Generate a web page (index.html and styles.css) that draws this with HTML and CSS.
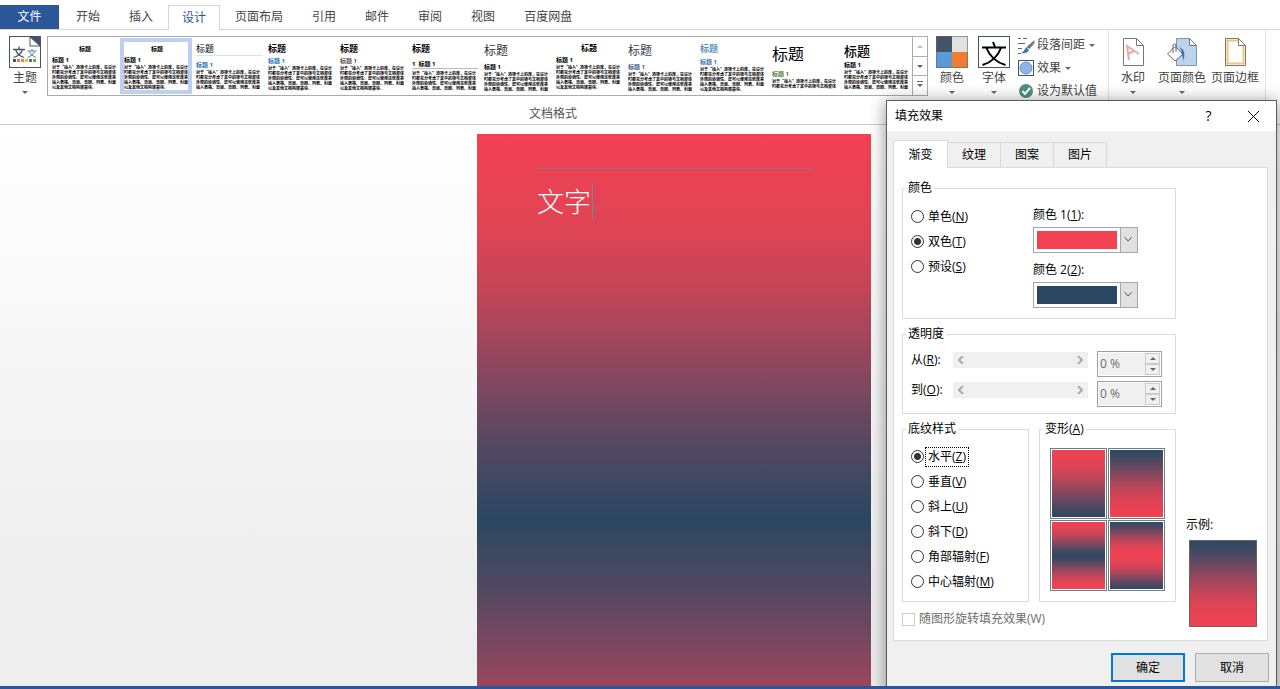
FILE: index.html
```
<!DOCTYPE html>
<html lang="zh-CN">
<head>
  <meta charset="UTF-8">
  <meta name="viewport" content="width=device-width, initial-scale=1.0">
  <title>填充效果</title>
  <link rel="stylesheet" href="styles.css">
</head>
<body>
  <div class="app">
    <nav class="tabs">
      <button class="tab file">文件</button>
      <button class="tab">开始</button>
      <button class="tab">插入</button>
      <button class="tab active">设计</button>
      <button class="tab">页面布局</button>
      <button class="tab">引用</button>
      <button class="tab">邮件</button>
      <button class="tab">审阅</button>
      <button class="tab">视图</button>
      <button class="tab">百度网盘</button>
    </nav>

    <div class="ribbon">
      <section class="group formats">
        <div class="group-items">
          <button class="big-btn themes">
            <svg width="32" height="32" viewBox="0 0 32 32">
              <path d="M1 1h21l9 8v22H1z" fill="#fff"/>
              <path d="M21 1h10v9z" fill="#44546a"/>
              <path d="M21 1v9h10z" fill="#fff" stroke="#44546a"/>
              <rect x=".5" y=".5" width="31" height="31" fill="none" stroke="#44546a"/>
              <path d="M4 13.500h12M10 10.500v3M6.500 13.500q2 6 8.500 8M13.500 13.500q-2 6-9 8" fill="none" stroke="#44546a" stroke-width="1.300"/>
              <path d="M18.500 15h9M23 13v2M20 15q2 5 7 6.500M26 15q-2 5-7.500 6.500" fill="none" stroke="#5b84b8"/>
              <path d="M4 23h3v3H4z" fill="#44546a"/>
              <path d="M8 23h3v3H8z" fill="#ed7d31"/>
              <path d="M12 23h3v3h-3z" fill="#e57d95"/>
              <path d="M16 23h3v3h-3z" fill="#ffc000"/>
              <path d="M20 23h3v3h-3z" fill="#4472c4"/>
              <path d="M24 23h3v3h-3z" fill="#70ad47"/>
            </svg>
            <span>主题</span>
            <i class="arrow"></i>
          </button>

          <div class="gallery">
            <div class="cards">
              <button class="card plain"><div class="doc"><b>标题</b><em>标题 1</em><p>对于“插入”选项卡上的库，在设计时都充分考虑了其中的项与文档整体外观的协调性。您可以使用这些库来插入表格、页眉、页脚、列表、封面以及其他文档构建基块。</p></div></button>
              <button class="card plain selected"><div class="doc"><b>标题</b><em>标题 1</em><p>对于“插入”选项卡上的库，在设计时都充分考虑了其中的项与文档整体外观的协调性。您可以使用这些库来插入表格、页眉、页脚、列表、封面以及其他文档构建基块。</p></div></button>
              <button class="card lined"><div class="doc"><b>标题</b><em>标题 1</em><p>对于“插入”选项卡上的库，在设计时都充分考虑了其中的项与文档整体外观的协调性。您可以使用这些库来插入表格、页眉、页脚、列表、封面</p></div></button>
              <button class="card basic"><div class="doc"><b>标题</b><em>标题 1</em><p>对于“插入”选项卡上的库，在设计时都充分考虑了其中的项与文档整体外观的协调性。您可以使用这些库来插入表格、页眉、页脚、列表、封面以及其他文档构建基块。</p></div></button>
              <button class="card basic mono"><div class="doc"><b>标题</b><em>标题 1</em><p>对于“插入”选项卡上的库，在设计时都充分考虑了其中的项与文档整体外观的协调性。您可以使用这些库来插入表格、页眉、页脚、列表、封面以及其他文档构建基块。</p></div></button>
              <button class="card numbered"><div class="doc"><b>标题</b><em>1&nbsp; 标题 1</em><p>对于“插入”选项卡上的库，在设计时都充分考虑了其中的项与文档整体外观的协调性。您可以使用这些库来插入表格、页眉、页脚、列表、封面</p></div></button>
              <button class="card light"><div class="doc"><b>标题</b><em>标题 1</em><p>对于“插入”选项卡上的库，在设计时都充分考虑了其中的项与文档整体外观的协调性。您可以使用这些库来插入表格、页眉、页脚、列表、封面</p></div></button>
              <button class="card centered"><div class="doc"><b>标题</b><em>标题 1</em><p>对于“插入”选项卡上的库，在设计时都充分考虑了其中的项与文档整体外观的协调性。您可以使用这些库来插入表格、页眉、页脚、列表、封面以及其他文档构建基块。</p></div></button>
              <button class="card light navy"><div class="doc"><b>标题</b><em>标题 1</em><p>对于“插入”选项卡上的库，在设计时都充分考虑了其中的项与文档整体外观的协调性。您可以使用这些库来插入表格、页眉、页脚、列表、封面</p></div></button>
              <button class="card blue"><div class="doc"><b>标题</b><em>标题 1</em><p>对于“插入”选项卡上的库，在设计时都充分考虑了其中的项与文档整体外观的协调性。您可以使用这些库来插入表格、页眉、页脚、列表、封面以及其他文档构建基块。</p></div></button>
              <button class="card large"><div class="doc"><b>标题</b><em>标题 1</em><p>对于“插入”选项卡上的库，在设计时都充分考虑了其中的项与文档整体</p></div></button>
              <button class="card medium"><div class="doc"><b>标题</b><em>标题 1</em><p>对于“插入”选项卡上的库，在设计时都充分考虑了其中的项与文档整体外观的协调性。您可以使用这些库来插入表格、页眉、页脚、列表、封面</p></div></button>
            </div>
            <div class="gallery-scroll">
              <button aria-label="上一行" disabled><i class="arrow up"></i></button>
              <button aria-label="下一行"><i class="arrow"></i></button>
              <button aria-label="其他"><i class="arrow more"></i></button>
            </div>
          </div>

          <button class="big-btn">
            <svg width="32" height="32" viewBox="0 0 32 32">
              <path d="M0 0h16v16H0z" fill="#44546a"/>
              <path d="M16 0h16v16H16z" fill="#e1e1e1"/>
              <path d="M0 16h16v16H0z" fill="#5b9bd5"/>
              <path d="M16 16h16v16H16z" fill="#ed7d31"/>
              <rect x=".5" y=".5" width="31" height="31" fill="none" stroke="#666" stroke-opacity=".6"/>
            </svg>
            <span>颜色</span>
            <i class="arrow"></i>
          </button>
          <button class="big-btn">
            <svg width="32" height="32" viewBox="0 0 32 32">
              <rect x=".5" y=".5" width="31" height="31" fill="#fff" stroke="#44546a"/>
              <path d="M4 11.500h24M15 6l2 5M8.500 12q5 13 19 17M23 12Q18 25 4.500 29" fill="none" stroke="#000" stroke-width="2"/>
            </svg>
            <span>字体</span>
            <i class="arrow"></i>
          </button>
          <div class="small-btns">
            <button class="small-btn">
              <svg width="17" height="17" viewBox="0 0 17 17">
                <path d="M0 1.500h3M5 1.500h4M0 6.500h7M0 11.500h4M0 16.500h3" stroke="#666"/>
                <path d="M16.500 3v3l-5 6-3-2z" fill="#777"/>
                <path d="M8 10l3 3q-2 4-8 3 3-1 5-6z" fill="#3a76b9"/>
              </svg>
              <span>段落间距</span><i class="arrow"></i>
            </button>
            <button class="small-btn">
              <svg width="17" height="17" viewBox="0 0 17 17">
                <rect x=".5" y=".5" width="15" height="15" fill="#fff" stroke="#44546a"/>
                <circle cx="8" cy="8" r="6" fill="#8fb4e6" stroke="#6690cc"/>
              </svg>
              <span>效果</span><i class="arrow"></i>
            </button>
            <button class="small-btn">
              <svg width="17" height="17" viewBox="0 0 17 17">
                <circle cx="8" cy="8" r="7" fill="#4f9280"/>
                <path d="M4.500 8l2.500 3 5-6" fill="none" stroke="#fff" stroke-width="2"/>
              </svg>
              <span>设为默认值</span>
            </button>
          </div>
        </div>
        <div class="group-label">文档格式</div>
      </section>

      <section class="group background">
        <div class="group-items">
          <button class="big-btn">
            <svg width="32" height="32" viewBox="0 0 32 32">
              <path d="M6.500 2.500h13l7 7v20h-20z" fill="#fff" stroke="#777"/>
              <path d="M19.500 2.500v7h7" fill="none" stroke="#777"/>
              <path d="M12 24l-2-14 12 8M11 18l6-3" fill="none" stroke="#e9aaa2" stroke-width="2"/>
            </svg>
            <span>水印</span>
            <i class="arrow"></i>
          </button>
          <button class="big-btn">
            <svg width="32" height="32" viewBox="0 0 32 32">
              <path d="M10.500 2.500h13l7 7v20h-20z" fill="#bdd2ec" stroke="#7f95b0"/>
              <path d="M23.500 2.500v7h7z" fill="#fff" stroke="#777"/>
              <path d="M9 10.500l8 7.500-8 7-7.500-7z" fill="#fff" stroke="#666"/>
              <path d="M7 17V9q1.500-2 3 0v7" fill="none" stroke="#666"/>
              <path d="M13 11q8 3 4 14 0-6-2-8 2-2-2-6z" fill="#2e74b5"/>
            </svg>
            <span>页面颜色</span>
            <i class="arrow"></i>
          </button>
          <button class="big-btn">
            <svg width="32" height="32" viewBox="0 0 32 32">
              <path d="M6.500 2.500h13l7 7v20h-20z" fill="#fff" stroke="#777"/>
              <path d="M19 4.500H8.500v23h16V10" fill="none" stroke="#f3c677" stroke-width="2"/>
              <path d="M19.500 2.500v7h7z" fill="#fff" stroke="#777"/>
            </svg>
            <span>页面边框</span>
          </button>
        </div>
      </section>
    </div>

    <main class="workspace">
      <div class="page">
        <div class="page-header"></div>
        <p class="page-text">文字<span class="caret"></span><svg class="mark" width="6" height="6" viewBox="0 0 6 6"><path d="M5.500 0v3L1 4M3 2L1 4l2 2" fill="none" stroke="#8a7478"/></svg></p>
      </div>
    </main>

    <div class="dialog" role="dialog" aria-labelledby="dialog-title">
      <header class="title-bar">
        <h1 id="dialog-title">填充效果</h1>
        <button class="title-btn" aria-label="帮助">?</button>
        <button class="title-btn" aria-label="关闭">
          <svg width="11" height="11" viewBox="0 0 11 11"><path d="M0 0l11 11M11 0L0 11" stroke="#000"/></svg>
        </button>
      </header>

      <div class="dialog-tabs">
        <button class="dialog-tab active">渐变</button>
        <button class="dialog-tab">纹理</button>
        <button class="dialog-tab">图案</button>
        <button class="dialog-tab">图片</button>
      </div>

      <form class="panel">
        <div class="options">
          <fieldset class="colors">
            <legend>颜色</legend>
            <div class="radios">
              <label><input type="radio" name="mode"><span>单色(<u>N</u>)</span></label>
              <label><input type="radio" name="mode" checked><span>双色(<u>T</u>)</span></label>
              <label><input type="radio" name="mode"><span>预设(<u>S</u>)</span></label>
            </div>
            <div class="pickers">
              <label for="color1">颜色 1(<u>1</u>):</label>
              <div class="picker">
                <select id="color1" class="red"><option aria-label="红色"></option></select>
                <svg class="picker-btn" width="18" height="26" viewBox="0 0 18 26"><path d="M4 10l4 4 4-4" fill="none" stroke="#333"/></svg>
              </div>
              <label for="color2">颜色 2(<u>2</u>):</label>
              <div class="picker">
                <select id="color2" class="navy"><option aria-label="深蓝"></option></select>
                <svg class="picker-btn" width="18" height="26" viewBox="0 0 18 26"><path d="M4 10l4 4 4-4" fill="none" stroke="#333"/></svg>
              </div>
            </div>
          </fieldset>

          <fieldset class="opacity">
            <legend>透明度</legend>
            <div class="opacity-row">
              <label for="from">从(<u>R</u>):</label>
              <div class="scroll">
                <svg width="6" height="8" viewBox="0 0 6 8"><path d="M5 0L1 4l4 4" fill="none" stroke="#aaa" stroke-width="2"/></svg>
                <input type="range" value="0" aria-label="从" disabled>
                <svg width="6" height="8" viewBox="0 0 6 8"><path d="M1 0l4 4-4 4" fill="none" stroke="#aaa" stroke-width="2"/></svg>
              </div>
              <div class="spin">
                <input type="text" id="from" value="0 %" disabled>
                <div class="spin-btns">
                  <button type="button" aria-label="增加" disabled><i class="arrow up"></i></button>
                  <button type="button" aria-label="减少" disabled><i class="arrow"></i></button>
                </div>
              </div>
            </div>
            <div class="opacity-row">
              <label for="to">到(<u>O</u>):</label>
              <div class="scroll">
                <svg width="6" height="8" viewBox="0 0 6 8"><path d="M5 0L1 4l4 4" fill="none" stroke="#aaa" stroke-width="2"/></svg>
                <input type="range" value="0" aria-label="到" disabled>
                <svg width="6" height="8" viewBox="0 0 6 8"><path d="M1 0l4 4-4 4" fill="none" stroke="#aaa" stroke-width="2"/></svg>
              </div>
              <div class="spin">
                <input type="text" id="to" value="0 %" disabled>
                <div class="spin-btns">
                  <button type="button" aria-label="增加" disabled><i class="arrow up"></i></button>
                  <button type="button" aria-label="减少" disabled><i class="arrow"></i></button>
                </div>
              </div>
            </div>
          </fieldset>

          <div class="styles-row">
            <fieldset class="shading">
              <legend>底纹样式</legend>
              <div class="radios">
                <label><input type="radio" name="shading" checked><span class="focused">水平(<u>Z</u>)</span></label>
                <label><input type="radio" name="shading"><span>垂直(<u>V</u>)</span></label>
                <label><input type="radio" name="shading"><span>斜上(<u>U</u>)</span></label>
                <label><input type="radio" name="shading"><span>斜下(<u>D</u>)</span></label>
                <label><input type="radio" name="shading"><span>角部辐射(<u>F</u>)</span></label>
                <label><input type="radio" name="shading"><span>中心辐射(<u>M</u>)</span></label>
              </div>
            </fieldset>
            <fieldset class="variants">
              <legend>变形(<u>A</u>)</legend>
              <div class="variant-grid">
                <button type="button" class="variant down" aria-label="变形 1"></button>
                <button type="button" class="variant up" aria-label="变形 2"></button>
                <button type="button" class="variant inner" aria-label="变形 3"></button>
                <button type="button" class="variant outer" aria-label="变形 4"></button>
              </div>
            </fieldset>
          </div>

          <label class="rotate"><input type="checkbox" disabled><span>随图形旋转填充效果(W)</span></label>
        </div>

        <div class="sample">
          <div>示例:</div>
          <div class="sample-box"></div>
        </div>
      </form>

      <footer class="actions">
        <button class="btn primary">确定</button>
        <button class="btn">取消</button>
      </footer>
    </div>
  </div>
</body>
</html>
```
FILE: styles.css
```
* {
  margin: 0;
  padding: 0;
  box-sizing: border-box;
}

:root {
  --red: #f24153;
  --navy: #2a4862;
  --word: #2b579a;
}

body, button, input, select {
  font-family: "Open Sans", "Noto Sans CJK SC", sans-serif;
  font-size: 12px;
  line-height: 16px;
  color: #000;
}

button {
  border: none;
  background: none;
  white-space: nowrap;
}

svg {
  display: block;
  flex: none;
}

.app {
  position: relative;
  display: flex;
  flex-direction: column;
  height: 100vh;
  overflow: hidden;
  background: #fff;
  border-bottom: 3px solid var(--word);
}

.arrow {
  display: block;
  width: 0;
  border: 3px solid transparent;
  border-top-color: #666;
  border-bottom-width: 0;
}

.arrow.up {
  border-top-width: 0;
  border-bottom: 3px solid #666;
}

/* tabs */
.tabs {
  display: flex;
  gap: 1px;
  height: 30px;
  padding-top: 5px;
  border-bottom: 1px solid #d4d4d4;
  flex: none;
}

.tab {
  height: 24px;
  padding: 0 14px;
  color: #444;
}

.tab.file {
  width: 59px;
  margin-right: 2px;
  background: var(--word);
  color: #fff;
}

.tab.active {
  height: 25px;
  padding: 0 13px;
  border: 1px solid #d4d4d4;
  border-bottom: none;
  background: #fff;
  color: var(--word);
}

/* ribbon */
.ribbon {
  display: flex;
  height: 95px;
  border-bottom: 1px solid #c8c8c8;
  flex: none;
}

.group {
  padding-top: 6px;
  border-right: 1px solid #e1e1e1;
}

.group-items {
  display: flex;
}

.formats {
  padding-left: 5px;
  padding-right: 11px;
}

.formats .group-items {
  gap: 2px;
}

.group-label {
  margin-top: 6px;
  padding-left: 4px;
  text-align: center;
  color: #555;
}

.big-btn {
  display: flex;
  flex-direction: column;
  align-items: center;
  min-width: 40px;
  color: #444;
}

.big-btn span {
  margin: 2px 0 5px;
}

.background .group-items {
  gap: 5px;
  padding: 0 6px 0 4px;
}

.gallery {
  display: flex;
  height: 60px;
  margin-right: 2px;
  border: 1px solid #ababab;
}

.cards {
  display: flex;
  overflow: hidden;
}

.card {
  display: flex;
  width: 72px;
  height: 56px;
  margin-top: 1px;
  padding: 4px 4px 0;
  text-align: left;
  white-space: normal;
  flex: none;
}

.card.selected {
  padding: 0;
  border: 4px solid #bdd0f0;
}

.doc {
  width: 66px;
  flex: none;
}

.doc b, .doc em {
  display: block;
  font-style: normal;
}

.doc b {
  margin-bottom: 2px;
  font-size: 9px;
  line-height: 13px;
}

.doc em {
  margin-bottom: 1px;
  font-size: 6px;
  line-height: 8px;
  font-weight: bold;
}

.doc p {
  font-family: "Noto Sans CJK SC", sans-serif;
  font-size: 4px;
  line-height: 5px;
  font-weight: bold;
}

.plain b {
  margin-bottom: 0;
  font-size: 6px;
  line-height: 14px;
  text-align: center;
}

.lined b {
  margin-bottom: 5px;
  border-bottom: 1px solid #d5e3f0;
  font-weight: normal;
}

.lined em, .basic em {
  color: #2e74b5;
}

.basic.mono em {
  color: #555;
}

.numbered b {
  margin-bottom: 5px;
}

.numbered em {
  margin-bottom: 2px;
  border-bottom: 1px solid #bbb;
}

.light b {
  margin-bottom: 3px;
  font-size: 12px;
  line-height: 18px;
  font-weight: normal;
  color: #333;
}

.light.navy b {
  color: #323e4f;
}

.light.navy em {
  color: #44628c;
}

.centered b {
  font-size: 8px;
  line-height: 12px;
  text-align: center;
}

.blue b {
  margin-bottom: 3px;
  color: #5b8fc9;
}

.blue em {
  color: #4472a8;
}

.large b {
  margin-bottom: 4px;
  font-size: 16px;
  line-height: 24px;
  font-weight: normal;
}

.large em {
  color: #538135;
}

.medium b {
  margin-bottom: 0;
  font-size: 13px;
  line-height: 19px;
  font-weight: 500;
}

.gallery-scroll {
  display: flex;
  flex-direction: column;
  width: 15px;
  border-left: 1px solid #ababab;
}

.gallery-scroll button {
  display: flex;
  align-items: center;
  justify-content: center;
  flex: 1;
}

.gallery-scroll button + button {
  border-top: 1px solid #ababab;
}

.gallery-scroll button:disabled {
  opacity: 0.4;
}

.arrow.more {
  position: relative;
}

.arrow.more::before {
  content: "";
  position: absolute;
  left: -3px;
  top: -6px;
  width: 6px;
  height: 1px;
  background: #666;
}

.small-btns {
  display: flex;
  flex-direction: column;
  gap: 5px;
  padding-left: 2px;
}

.small-btn {
  display: flex;
  align-items: center;
  gap: 2px;
  height: 18px;
  color: #444;
}

.small-btn .arrow {
  margin-left: 2px;
}

/* document */
.workspace {
  display: flex;
  justify-content: center;
  align-items: flex-start;
  flex: 1;
  min-height: 0;
  padding: 9px 0 0 68px;
  overflow: hidden;
  background: linear-gradient(#fff, #eee 80%);
}

.page {
  width: 394px;
  height: 768px;
  padding: 34px 59px 0 60px;
  flex: none;
}

.page-header {
  border-top: 1px solid #94736f;
}

.page-text {
  display: flex;
  align-items: center;
  margin-top: 15px;
  font-size: 27px;
  line-height: 36px;
  font-weight: 300;
  color: #fff;
}

.caret {
  width: 1px;
  height: 36px;
  margin-left: 1px;
  background: #7d8584;
}

.mark {
  margin-top: 12px;
}

/* dialog */
.dialog {
  position: absolute;
  top: 100px;
  right: 3px;
  width: 391px;
  border: 1px solid #5c5c5c;
  background: #f0f0f0;
  box-shadow: 0 2px 16px rgba(0, 0, 0, 0.45);
}

.title-bar {
  display: flex;
  align-items: center;
  height: 30px;
  padding-left: 8px;
  background: #fff;
}

.title-bar h1 {
  flex: 1;
  font-size: 12px;
  font-weight: normal;
}

.title-btn {
  display: flex;
  align-items: center;
  justify-content: center;
  width: 45px;
  height: 30px;
  font-size: 14px;
}

.dialog-tabs {
  display: flex;
  align-items: flex-end;
  margin: 9px 6px 0;
}

.dialog-tab {
  width: 53px;
  height: 25px;
  border: 1px solid #d9d9d9;
  border-left: none;
  border-bottom: none;
}

.dialog-tab.active {
  position: relative;
  width: 55px;
  height: 28px;
  margin-bottom: -1px;
  border-left: 1px solid #d9d9d9;
  background: #fff;
}

.panel {
  display: flex;
  gap: 10px;
  margin: 0 8px 0 6px;
  padding: 12px 8px 11px;
  border: 1px solid #dcdcdc;
  background: #fff;
}

.options {
  display: flex;
  flex-direction: column;
  gap: 7px;
  width: 274px;
}

fieldset {
  min-width: 0;
  padding: 0 8px;
  border: 1px solid #dcdcdc;
}

legend {
  margin-left: -5px;
  padding: 0 2px;
}

.colors {
  height: 139px;
}

.colors > .radios {
  float: left;
  width: 122px;
  padding-top: 8px;
}

.pickers {
  display: flex;
  flex-direction: column;
  padding-top: 5px;
}

.pickers label {
  height: 26px;
  line-height: 28px;
}

.picker {
  position: relative;
  width: 105px;
  height: 26px;
  margin-bottom: 3px;
}

.picker select {
  appearance: none;
  width: 105px;
  height: 26px;
  padding: 3px 20px 3px 3px;
  border: 1px solid #a0a8ac;
  background-clip: content-box;
}

.picker select.red {
  background-color: var(--red);
}

.picker select.navy {
  background-color: var(--navy);
}

.picker-btn {
  position: absolute;
  top: 0;
  right: 0;
  border: 1px solid #a6a6a6;
  background: #e1e1e1;
  pointer-events: none;
}

.radios {
  padding-top: 7px;
}

.radios label {
  display: flex;
  align-items: center;
  gap: 2px;
  height: 25px;
}

.radios span {
  padding: 0 2px;
  line-height: 18px;
}

.radios .focused {
  outline: 1px dotted #000;
}

input[type="radio"] {
  appearance: none;
  width: 13px;
  height: 13px;
  border: 1px solid #333;
  border-radius: 50%;
  background: #fff;
}

input[type="radio"]:checked {
  background: radial-gradient(circle, #333 3px, #fff 4px);
}

.opacity {
  height: 88px;
}

.opacity .opacity-row:first-of-type {
  margin-top: 9px;
}

.opacity-row {
  display: flex;
  align-items: flex-start;
  height: 30px;
}

.opacity-row label {
  width: 42px;
  line-height: 18px;
}

.scroll {
  display: flex;
  align-items: center;
  width: 135px;
  height: 16px;
  margin: 1px 9px 0 0;
  padding: 0 5px;
  background: #f0f0f0;
}

.scroll input {
  appearance: none;
  flex: 1;
  min-width: 0;
  background: none;
}

.scroll input::-webkit-slider-thumb {
  appearance: none;
}

.spin {
  display: flex;
  width: 65px;
  height: 26px;
  padding: 1px;
  border: 1px solid #a0a0a0;
}

.spin input {
  width: 46px;
  padding-left: 1px;
  border: none;
  background: #f0f0f0;
  color: #6d6d6d;
}

.spin-btns {
  display: flex;
  flex-direction: column;
  flex: 1;
}

.spin-btns button {
  display: flex;
  align-items: center;
  justify-content: center;
  flex: 1;
  border: 1px solid #ccc;
  background: #f0f0f0;
}

.styles-row {
  display: flex;
  gap: 10px;
}

.shading {
  width: 127px;
  height: 181px;
}

.variants {
  width: 137px;
  height: 181px;
}

.variant-grid {
  display: grid;
  grid-template-columns: 57px 57px;
  gap: 1px;
  margin: 11px 0 0 2px;
}

.variant {
  height: 71px;
  padding: 1px;
  border: 1px solid #6b8080;
  background-clip: content-box;
}

.down {
  background-image: linear-gradient(var(--red), #e04454 24%, #c44558 39%, #a0465c 54%, #784860 68%, #514860 82%, var(--navy));
}

.up, .sample-box {
  background-image: linear-gradient(var(--navy), #514860 18%, #784860 32%, #a0465c 46%, #c44558 61%, #e04454 76%, var(--red));
}

.inner, .page {
  background-image: linear-gradient(var(--red), #e04454 12%, #c44558 20%, #a0465c 27%, #784860 34%, #514860 41%, var(--navy), #514860 59%, #784860 66%, #a0465c 73%, #c44558 80%, #e04454 88%, var(--red));
}

.outer {
  background-image: linear-gradient(var(--navy), #514860 9%, #784860 16%, #a0465c 23%, #c44558 30%, #e04454 38%, var(--red), #e04454 62%, #c44558 70%, #a0465c 77%, #784860 84%, #514860 91%, var(--navy));
}

.rotate {
  display: flex;
  align-items: center;
  gap: 4px;
  height: 20px;
  color: #6d6d6d;
}

.rotate input {
  appearance: none;
  width: 13px;
  height: 13px;
  border: 1px solid #ccc;
}

.sample {
  align-self: flex-end;
}

.sample-box {
  width: 68px;
  height: 87px;
  margin: 7px 0 2px 3px;
  border: 1px solid #666;
}

.actions {
  display: flex;
  justify-content: flex-end;
  gap: 10px;
  padding: 12px 7px;
}

.btn {
  width: 74px;
  height: 29px;
  border: 1px solid #adadad;
  background: #e1e1e1;
}

.btn.primary {
  border: 2px solid #0078d7;
}
```
